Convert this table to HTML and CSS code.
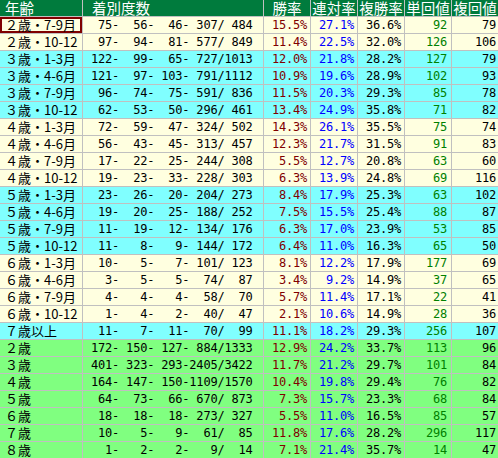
FILE: index.html
```html
<!DOCTYPE html>
<html lang="ja">
<head>
<meta charset="utf-8">
<title>年齢別成績</title>
<link rel="stylesheet" href="styles.css">
</head>
<body>
<div class="tbl">
  <div class="row head">
    <div class="c age h-age">年齢</div>
    <div class="c h-cnt">着別度数</div>
    <div class="c hc">勝率</div>
    <div class="c hc">連対率</div>
    <div class="c hc">複勝率</div>
    <div class="c hc">単回値</div>
    <div class="c hc">複回値</div>
  </div>

  <div class="row cream"><div class="c age sel">２歳・7-9月</div><div class="c cnt"> 75-  56-  46- 307/ 484</div><div class="c n win">15.5%</div><div class="c n ren">27.1%</div><div class="c n fuku">36.6%</div><div class="c n tan">92</div><div class="c n fk">79</div></div>
  <div class="row cream"><div class="c age">２歳・10-12</div><div class="c cnt"> 97-  94-  81- 577/ 849</div><div class="c n win">11.4%</div><div class="c n ren">22.5%</div><div class="c n fuku">32.0%</div><div class="c n tan">126</div><div class="c n fk">106</div></div>
  <div class="row cyan"><div class="c age">３歳・1-3月</div><div class="c cnt">122-  99-  65- 727/1013</div><div class="c n win">12.0%</div><div class="c n ren">21.8%</div><div class="c n fuku">28.2%</div><div class="c n tan">127</div><div class="c n fk">79</div></div>
  <div class="row cyan"><div class="c age">３歳・4-6月</div><div class="c cnt">121-  97- 103- 791/1112</div><div class="c n win">10.9%</div><div class="c n ren">19.6%</div><div class="c n fuku">28.9%</div><div class="c n tan">102</div><div class="c n fk">93</div></div>
  <div class="row cyan"><div class="c age">３歳・7-9月</div><div class="c cnt"> 96-  74-  75- 591/ 836</div><div class="c n win">11.5%</div><div class="c n ren">20.3%</div><div class="c n fuku">29.3%</div><div class="c n tan">85</div><div class="c n fk">78</div></div>
  <div class="row cyan"><div class="c age">３歳・10-12</div><div class="c cnt"> 62-  53-  50- 296/ 461</div><div class="c n win">13.4%</div><div class="c n ren">24.9%</div><div class="c n fuku">35.8%</div><div class="c n tan">71</div><div class="c n fk">82</div></div>
  <div class="row cream"><div class="c age">４歳・1-3月</div><div class="c cnt"> 72-  59-  47- 324/ 502</div><div class="c n win">14.3%</div><div class="c n ren">26.1%</div><div class="c n fuku">35.5%</div><div class="c n tan">75</div><div class="c n fk">74</div></div>
  <div class="row cream"><div class="c age">４歳・4-6月</div><div class="c cnt"> 56-  43-  45- 313/ 457</div><div class="c n win">12.3%</div><div class="c n ren">21.7%</div><div class="c n fuku">31.5%</div><div class="c n tan">91</div><div class="c n fk">83</div></div>
  <div class="row cream"><div class="c age">４歳・7-9月</div><div class="c cnt"> 17-  22-  25- 244/ 308</div><div class="c n win">5.5%</div><div class="c n ren">12.7%</div><div class="c n fuku">20.8%</div><div class="c n tan">63</div><div class="c n fk">60</div></div>
  <div class="row cream"><div class="c age">４歳・10-12</div><div class="c cnt"> 19-  23-  33- 228/ 303</div><div class="c n win">6.3%</div><div class="c n ren">13.9%</div><div class="c n fuku">24.8%</div><div class="c n tan">69</div><div class="c n fk">116</div></div>
  <div class="row cyan"><div class="c age">５歳・1-3月</div><div class="c cnt"> 23-  26-  20- 204/ 273</div><div class="c n win">8.4%</div><div class="c n ren">17.9%</div><div class="c n fuku">25.3%</div><div class="c n tan">63</div><div class="c n fk">102</div></div>
  <div class="row cyan"><div class="c age">５歳・4-6月</div><div class="c cnt"> 19-  20-  25- 188/ 252</div><div class="c n win">7.5%</div><div class="c n ren">15.5%</div><div class="c n fuku">25.4%</div><div class="c n tan">88</div><div class="c n fk">87</div></div>
  <div class="row cyan"><div class="c age">５歳・7-9月</div><div class="c cnt"> 11-  19-  12- 134/ 176</div><div class="c n win">6.3%</div><div class="c n ren">17.0%</div><div class="c n fuku">23.9%</div><div class="c n tan">53</div><div class="c n fk">85</div></div>
  <div class="row cyan"><div class="c age">５歳・10-12</div><div class="c cnt"> 11-   8-   9- 144/ 172</div><div class="c n win">6.4%</div><div class="c n ren">11.0%</div><div class="c n fuku">16.3%</div><div class="c n tan">65</div><div class="c n fk">50</div></div>
  <div class="row cream"><div class="c age">６歳・1-3月</div><div class="c cnt"> 10-   5-   7- 101/ 123</div><div class="c n win">8.1%</div><div class="c n ren">12.2%</div><div class="c n fuku">17.9%</div><div class="c n tan">177</div><div class="c n fk">69</div></div>
  <div class="row cream"><div class="c age">６歳・4-6月</div><div class="c cnt">  3-   5-   5-  74/  87</div><div class="c n win">3.4%</div><div class="c n ren">9.2%</div><div class="c n fuku">14.9%</div><div class="c n tan">37</div><div class="c n fk">65</div></div>
  <div class="row cream"><div class="c age">６歳・7-9月</div><div class="c cnt">  4-   4-   4-  58/  70</div><div class="c n win">5.7%</div><div class="c n ren">11.4%</div><div class="c n fuku">17.1%</div><div class="c n tan">22</div><div class="c n fk">41</div></div>
  <div class="row cream"><div class="c age">６歳・10-12</div><div class="c cnt">  1-   4-   2-  40/  47</div><div class="c n win">2.1%</div><div class="c n ren">10.6%</div><div class="c n fuku">14.9%</div><div class="c n tan">28</div><div class="c n fk">36</div></div>
  <div class="row cyan"><div class="c age">７歳以上</div><div class="c cnt"> 11-   7-  11-  70/  99</div><div class="c n win">11.1%</div><div class="c n ren">18.2%</div><div class="c n fuku">29.3%</div><div class="c n tan">256</div><div class="c n fk">107</div></div>

  <div class="row green"><div class="c age">２歳</div><div class="c cnt">172- 150- 127- 884/1333</div><div class="c n win">12.9%</div><div class="c n ren">24.2%</div><div class="c n fuku">33.7%</div><div class="c n tan">113</div><div class="c n fk">96</div></div>
  <div class="row green"><div class="c age">３歳</div><div class="c cnt">401- 323- 293-2405/3422</div><div class="c n win">11.7%</div><div class="c n ren">21.2%</div><div class="c n fuku">29.7%</div><div class="c n tan">101</div><div class="c n fk">84</div></div>
  <div class="row green"><div class="c age">４歳</div><div class="c cnt">164- 147- 150-1109/1570</div><div class="c n win">10.4%</div><div class="c n ren">19.8%</div><div class="c n fuku">29.4%</div><div class="c n tan">76</div><div class="c n fk">82</div></div>
  <div class="row green"><div class="c age">５歳</div><div class="c cnt"> 64-  73-  66- 670/ 873</div><div class="c n win">7.3%</div><div class="c n ren">15.7%</div><div class="c n fuku">23.3%</div><div class="c n tan">68</div><div class="c n fk">84</div></div>
  <div class="row green"><div class="c age">６歳</div><div class="c cnt"> 18-  18-  18- 273/ 327</div><div class="c n win">5.5%</div><div class="c n ren">11.0%</div><div class="c n fuku">16.5%</div><div class="c n tan">85</div><div class="c n fk">57</div></div>
  <div class="row green"><div class="c age">７歳</div><div class="c cnt"> 10-   5-   9-  61/  85</div><div class="c n win">11.8%</div><div class="c n ren">17.6%</div><div class="c n fuku">28.2%</div><div class="c n tan">296</div><div class="c n fk">117</div></div>
  <div class="row green"><div class="c age">８歳</div><div class="c cnt">  1-   2-   2-   9/  14</div><div class="c n win">7.1%</div><div class="c n ren">21.4%</div><div class="c n fuku">35.7%</div><div class="c n tan">14</div><div class="c n fk">47</div></div>
</div>
</body>
</html>
```

FILE: styles.css
```css
html, body {
  margin: 0;
  padding: 0;
  background: #c0c0c0;
}

.tbl {
  display: flex;
  flex-direction: column;
  gap: 1px;
  width: 498px;
  background: #c0c0c0;
}

.row {
  display: grid;
  grid-template-columns: 82px 180px 46px 46px 46px 46px 46px;
  column-gap: 1px;
  height: 16px;
}

.c {
  height: 16px;
  line-height: 16px;
  white-space: pre;
  font-family: "DejaVu Sans Mono", "Noto Sans CJK JP", monospace;
  font-size: 12px;
  letter-spacing: -0.2px;
  color: #000;
}

.cream .c { background: #ffffe0; }
.cyan .c { background: #80ffff; }
.green .c { background: #80ff80; }

.head .c {
  background: #007b3d;
  color: #fff;
  font-family: "Noto Sans CJK JP", sans-serif;
  font-size: 14.5px;
  letter-spacing: 0;
  line-height: 16px;
}

.h-age { padding-left: 1px; }
.h-cnt { padding-left: 9px; }
.hc { text-align: center; }

.age {
  font-family: "Noto Sans CJK JP", sans-serif;
  font-size: 13px;
  letter-spacing: 0;
  padding-left: 5px;
}

.sel {
  box-shadow: inset 0 0 0 2px #800000;
}

.cnt {
  padding-left: 8px;
}

.n {
  text-align: right;
  padding-right: 3px;
}

.win { color: #800000; }
.ren { color: #0000ff; }
.fuku { color: #000; }
.tan { color: #008000; padding-right: 4px; }
.fk { color: #000; padding-right: 2px; }
```
